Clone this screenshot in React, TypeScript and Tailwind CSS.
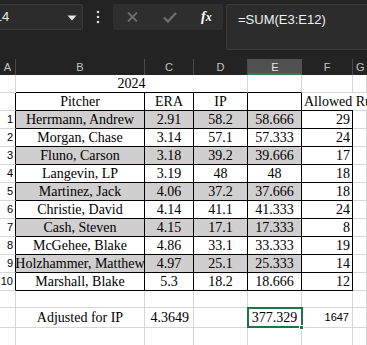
import React from 'react';

const serif = "font-['Liberation_Serif','Times_New_Roman',serif] text-[14px] leading-none text-black";
const sans = "font-['Liberation_Sans',Arial,sans-serif]";
const base = 'box-border flex shrink-0 items-end border-r border-b whitespace-nowrap';

const pitchers = [
  ['Herrmann, Andrew', '2.91', '58.2', '58.666', '29'],
  ['Morgan, Chase', '3.14', '57.1', '57.333', '24'],
  ['Fluno, Carson', '3.18', '39.2', '39.666', '17'],
  ['Langevin, LP', '3.19', '48', '48', '18'],
  ['Martinez, Jack', '4.06', '37.2', '37.666', '18'],
  ['Christie, David', '4.14', '41.1', '41.333', '24'],
  ['Cash, Steven', '4.15', '17.1', '17.333', '8'],
  ['McGehee, Blake', '4.86', '33.1', '33.333', '19'],
  ['Holzhammer, Matthew', '4.97', '25.1', '25.333', '14'],
  ['Marshall, Blake', '5.3', '18.2', '18.666', '12'],
];

function BlankRow({ h }: { h: string }) {
  return (
    <div className={`flex ${h}`}>
      <div className={`${base} w-[16px] border-[#d6d6d6]`} />
      <div className={`${base} w-[129px] border-[#d6d6d6]`} />
      <div className={`${base} w-[49px] border-[#d6d6d6]`} />
      <div className={`${base} w-[54px] border-[#d6d6d6]`} />
      <div className={`${base} w-[54px] border-[#d6d6d6]`} />
      <div className={`${base} w-[51px] border-[#d6d6d6]`} />
      <div className={`${base} flex-1 border-[#d6d6d6]`} />
    </div>
  );
}

export default function App() {
  return (
    <div className={`h-[345px] w-[367px] overflow-hidden bg-[#232323] ${sans}`}>
      {/* formula bar strip */}
      <div className="flex h-[59px] items-start pt-[4px]">
        <div className="relative -ml-[20px] flex h-[26px] w-[103px] shrink-0 items-center rounded-[2px] border border-[#3a3a3a] bg-[#2c2c2c] pl-[5px] text-[13px] text-[#e8e8e8]">
          E14
          <svg className="absolute right-[5px] top-[10px]" width="10" height="6" viewBox="0 0 10 6">
            <path d="M0.5 0.5 L9.5 0.5 L5 5.5 Z" fill="#e6e6e6" />
          </svg>
        </div>
        <div className="flex h-[26px] w-[30px] shrink-0 items-center justify-center">
          <svg width="4" height="14" viewBox="0 0 4 14">
            <circle cx="2" cy="2" r="1.3" fill="#d8d8d8" />
            <circle cx="2" cy="7" r="1.3" fill="#d8d8d8" />
            <circle cx="2" cy="12" r="1.3" fill="#d8d8d8" />
          </svg>
        </div>
        <div className="flex h-[26px] w-[110px] shrink-0 items-center rounded-[2px] bg-[#2e2e2e]">
          <svg className="ml-[14px]" width="11" height="10" viewBox="0 0 11 10">
            <path d="M1 0.5 L10 9.5 M10 0.5 L1 9.5" stroke="#6f6f6f" strokeWidth="1.8" />
          </svg>
          <svg className="ml-[25px]" width="14" height="11" viewBox="0 0 14 11">
            <path d="M1 5.5 L5 9.5 L13 1" stroke="#6f6f6f" strokeWidth="2.4" fill="none" />
          </svg>
          <span className="ml-[24px] font-['Liberation_Serif',serif] text-[14px] font-bold italic leading-none text-white">
            f<span className="text-[12px]">x</span>
          </span>
        </div>
        <div className="-mr-[4px] ml-[3px] flex h-[46px] flex-1 rounded-[2px] border border-[#3a3a3a] bg-[#2c2c2c] pl-[11px] pt-[8px] text-[13px] leading-none text-[#f0f0f0]">
          =SUM(E3:E12)
        </div>
      </div>

      {/* column headers */}
      <div className="flex h-[16px] text-[11px] text-[#c4c4c4]">
        <div className="box-border flex w-[16px] shrink-0 items-center justify-center border-r border-[#4a4a4a]">A</div>
        <div className="box-border flex w-[129px] shrink-0 items-center justify-center border-r border-[#4a4a4a]">B</div>
        <div className="box-border flex w-[49px] shrink-0 items-center justify-center border-r border-[#4a4a4a]">C</div>
        <div className="box-border flex w-[54px] shrink-0 items-center justify-center border-r border-[#4a4a4a]">D</div>
        <div className="box-border flex w-[54px] shrink-0 items-center justify-center border-b-2 border-[#2a7d4f] bg-[#505050] pt-[2px] text-[#e6e6e6]">E</div>
        <div className="box-border flex w-[51px] shrink-0 items-center justify-center border-r border-[#4a4a4a]">F</div>
        <div className="box-border flex flex-1 items-center pl-[3px]">G</div>
      </div>

      <div className="bg-white">
        {/* 2024 row */}
        <div className="flex h-[18px]">
          <div className={`${base} w-[16px] border-[#d6d6d6]`} />
          <div className={`${base} w-[232px] justify-center border-r-[#d6d6d6] border-b-black pb-[1px] ${serif}`}>2024</div>
          <div className={`${base} w-[54px] border-r-[#d6d6d6] border-b-black`} />
          <div className={`${base} w-[51px] border-[#d6d6d6]`} />
          <div className={`${base} flex-1 border-[#d6d6d6]`} />
        </div>

        {/* header row */}
        <div className="flex h-[18px]">
          <div className={`${base} w-[16px] border-r-black border-b-[#d6d6d6]`} />
          <div className={`${base} w-[129px] justify-center border-black pb-[1px] ${serif}`}>Pitcher</div>
          <div className={`${base} w-[49px] justify-center border-black pb-[1px] ${serif}`}>ERA</div>
          <div className={`${base} w-[54px] justify-center border-black pb-[1px] ${serif}`}>IP</div>
          <div className={`${base} w-[54px] border-black`} />
          <div className={`${base} w-[51px] border-r-0 border-b-black pb-[1px] pl-[2px] ${serif}`}>Allowed Runs</div>
          <div className="box-border flex-1 border-b border-[#d6d6d6]" />
        </div>

        {pitchers.map((p, i) => {
          const fill = i % 2 === 0 ? 'bg-[#d0cece]' : 'bg-white';
          return (
            <div key={p[0]} className="flex h-[18px]">
              <div className={`${base} w-[16px] justify-end border-r-black border-b-[#d6d6d6] pb-[3px] pr-[2px] text-[11px] leading-none text-black`}>
                {i + 1}
              </div>
              <div className={`${base} w-[129px] justify-center overflow-hidden border-black pb-[1px] ${fill} ${serif}`}>{p[0]}</div>
              <div className={`${base} w-[49px] justify-center border-black pb-[1px] ${fill} ${serif}`}>{p[1]}</div>
              <div className={`${base} w-[54px] justify-center border-black pb-[1px] ${fill} ${serif}`}>{p[2]}</div>
              <div className={`${base} w-[54px] justify-center border-black pb-[1px] ${fill} ${serif}`}>{p[3]}</div>
              <div className={`${base} w-[51px] justify-end border-black pb-[1px] pr-[2px] ${serif}`}>{p[4]}</div>
              <div className={`${base} flex-1 border-[#d6d6d6]`} />
            </div>
          );
        })}

        <BlankRow h="h-[17px]" />

        {/* totals row */}
        <div className="flex h-[20px]">
          <div className={`${base} w-[16px] border-[#d6d6d6]`} />
          <div className={`${base} w-[129px] justify-center border-[#d6d6d6] pb-[2px] ${serif}`}>Adjusted for IP</div>
          <div className={`${base} w-[49px] justify-end border-[#d6d6d6] pb-[2px] pr-[4px] ${serif}`}>4.3649</div>
          <div className={`${base} w-[54px] border-[#d6d6d6]`} />
          <div className={`${base} relative w-[54px] justify-center border-[#d6d6d6] pb-[2px] ${serif}`}>
            377.329
            <div className="pointer-events-none absolute -left-[1px] -top-[1px] h-[21px] w-[56px] border-2 border-[#217346]" />
            <div className="absolute -right-[3px] -bottom-[3px] h-[5px] w-[5px] border border-white bg-[#217346]" />
          </div>
          <div className={`${base} w-[51px] justify-end border-[#d6d6d6] pb-[4px] pr-[3px] text-[11px] leading-none text-black`}>1647</div>
          <div className={`${base} flex-1 border-[#d6d6d6]`} />
        </div>

        <BlankRow h="h-[18px]" />
        <BlankRow h="h-[18px]" />
      </div>
    </div>
  );
}
